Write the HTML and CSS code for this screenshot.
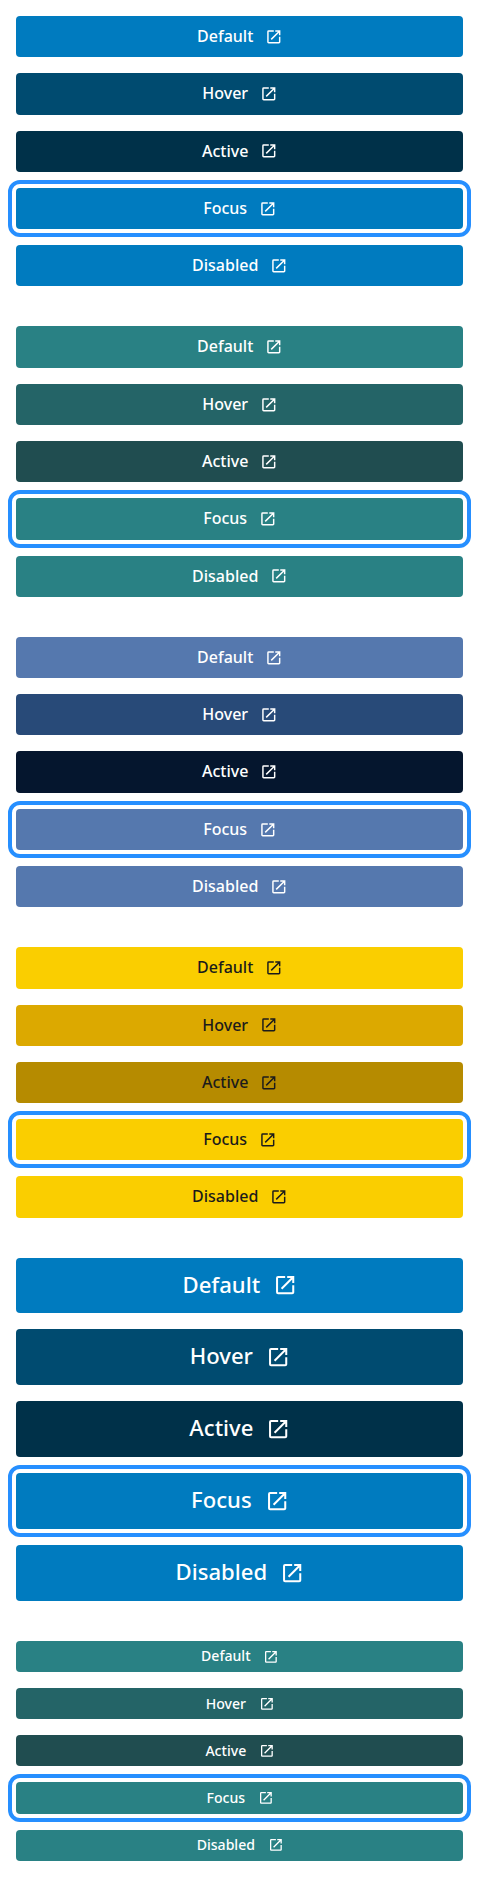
FILE: index.html
```html
<!DOCTYPE html>
<html lang="en">
<head>
<meta charset="utf-8">
<title>Buttons</title>
<link rel="stylesheet" href="styles.css">
</head>
<body>
<svg class="sprite" aria-hidden="true"><symbol id="open" viewBox="0 0 24 24"><path d="M19 19H5V5h7V3H5a2 2 0 0 0-2 2v14a2 2 0 0 0 2 2h14c1.100 0 2-.9 2-2v-7h-2v7zM14 3v2h3.590l-9.830 9.830 1.410 1.410L19 6.410V10h2V3h-7z"/></symbol></svg>
<main class="page"></main>
<script src="script.js"></script>
</body>
</html>
```

FILE: styles.css
```css
body {
  margin: 0;
  background: #fff;
  font-family: "Noto Sans", "Open Sans", sans-serif;
}

.sprite {
  position: absolute;
  width: 0;
  height: 0;
}

.page {
  display: flex;
  flex-direction: column;
  gap: 40px;
  padding: 16px;
}

.group {
  display: flex;
  flex-direction: column;
  gap: 16px;
  --size: 16px;
  --height: 41.29px;
  --gap: 12px;
  --icon: 17.6px;
  --lift: 0;
  --text: #fff;
}

.large {
  --size: 22.08px;
  --height: 55.85px;
  --gap: 13px;
  --icon: 24.3px;
  --lift: 2px;
}

.small {
  --size: 14.08px;
  --height: 31.21px;
  --gap: 12.6px;
  --icon: 15.8px;
  --lift: 1px;
}

.button {
  display: flex;
  align-items: center;
  justify-content: center;
  gap: var(--gap);
  box-sizing: border-box;
  width: 100%;
  height: var(--height);
  margin: 0;
  padding: 0 16px 0 17px;
  border: 0;
  border-radius: 4px;
  background: var(--base);
  color: var(--text);
  font-family: inherit;
  font-size: var(--size);
  font-weight: 500;
  line-height: 1.08;
}

.label {
  padding-bottom: var(--lift);
}

.icon {
  flex: none;
  width: var(--icon);
  height: var(--icon);
  fill: currentColor;
}

.blue { --base: #007bbf; --hover: #004b70; --active: #003149; }
.teal { --base: #298184; --hover: #246467; --active: #204d50; }
.indigo { --base: #5578ae; --hover: #284a78; --active: #05162e; }
.yellow { --base: #face00; --hover: #dca900; --active: #b68b00; --text: #1b1b1b; }

.is-hover { background: var(--hover); }
.is-active { background: var(--active); }
.is-focus { outline: 4px solid #268fff; outline-offset: 4px; }
```

FILE: script.js
```js
const groups = ["blue", "teal", "indigo", "yellow", "blue large", "teal small"];
const states = ["Default", "Hover", "Active", "Focus", "Disabled"];

document.querySelector(".page").innerHTML = groups.map(group =>
  `<section class="group ${group}">` + states.map(state =>
    `<button class="button is-${state.toLowerCase()}"><span class="label">${state}</span><svg class="icon"><use href="#open"/></svg></button>`
  ).join("") + "</section>"
).join("");
```
